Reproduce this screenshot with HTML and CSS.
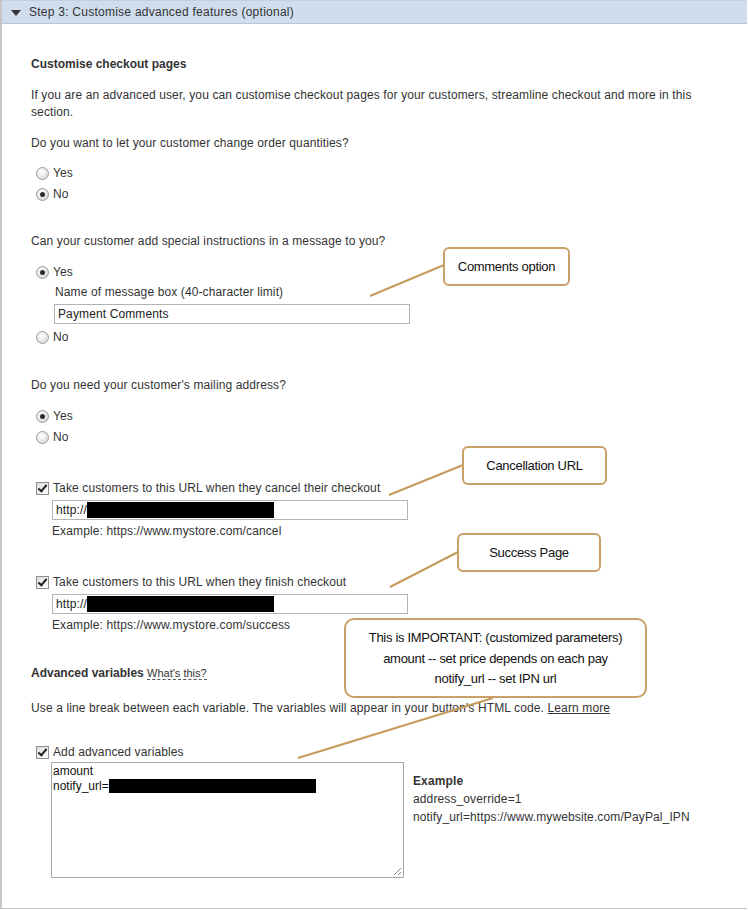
FILE: index.html
```html
<!DOCTYPE html>
<html lang="en">
<head>
<meta charset="utf-8">
<title>Step 3: Customise advanced features</title>
<link rel="stylesheet" href="styles.css">
</head>
<body>
<div class="panel">
  <div class="hdr"><span class="tri"></span>Step 3: Customise advanced features (optional)</div>
  <div class="content">
    <h3 class="title">Customise checkout pages</h3>
    <p class="intro">If you are an advanced user, you can customise checkout pages for your customers, streamline checkout and more in this section.</p>

    <p class="q q1">Do you want to let your customer change order quantities?</p>
    <div class="opt"><span class="radio"></span>Yes</div>
    <div class="opt"><span class="radio on"></span>No</div>

    <p class="q q2">Can your customer add special instructions in a message to you?</p>
    <div class="opt"><span class="radio on"></span>Yes</div>
    <div class="sub">Name of message box (40-character limit)</div>
    <div class="field msg">Payment Comments</div>
    <div class="opt"><span class="radio"></span>No</div>

    <p class="q q3">Do you need your customer's mailing address?</p>
    <div class="opt"><span class="radio on"></span>Yes</div>
    <div class="opt"><span class="radio"></span>No</div>

    <div class="opt chkrow c1"><span class="check"></span>Take customers to this URL when they cancel their checkout</div>
    <div class="field url">http://<span class="redact"></span></div>
    <div class="example">Example: https://www.mystore.com/cancel</div>

    <div class="opt chkrow c2"><span class="check"></span>Take customers to this URL when they finish checkout</div>
    <div class="field url">http://<span class="redact"></span></div>
    <div class="example">Example: https://www.mystore.com/success</div>

    <h3 class="title adv">Advanced variables <span class="whats">What's this?</span></h3>
    <p class="q q4">Use a line break between each variable. The variables will appear in your button's HTML code. <span class="learn">Learn more</span></p>

    <div class="opt chkrow c3"><span class="check"></span>Add advanced variables</div>
    <div class="varrow">
      <div class="textarea">
        <div>amount</div>
        <div>notify_url=<span class="redact tall"></span></div>
        <span class="grip"></span>
      </div>
      <div class="exbox">
        <div class="exhead">Example</div>
        <div>address_override=1</div>
        <div>notify_url=https://www.mywebsite.com/PayPal_IPN</div>
      </div>
    </div>
  </div>

  <svg class="leaders" width="748" height="910" viewBox="0 0 748 910">
    <line x1="370" y1="296" x2="444" y2="265"/>
    <line x1="389" y1="495" x2="463" y2="465"/>
    <line x1="390" y1="587" x2="458" y2="552"/>
    <line x1="298" y1="758" x2="493" y2="698"/>
  </svg>
  <div class="callout co1">Comments option</div>
  <div class="callout co2">Cancellation URL</div>
  <div class="callout co3">Success Page</div>
  <div class="callout co4">This is IMPORTANT: (customized parameters)<br>amount -- set price depends on each pay<br>notify_url -- set IPN url</div>
</div>
</body>
</html>
```
FILE: styles.css
```css
html, body {
  margin: 0;
  padding: 0;
  background: #fff;
}
body {
  font-family: "Liberation Sans", Arial, sans-serif;
  font-size: 12px;
  color: #333;
}
.panel {
  position: relative;
  width: 747px;
  height: 909px;
  box-sizing: border-box;
  border-left: 2px solid #c6c6c6;
  border-bottom: 1px solid #c6c6c6;
}
.hdr {
  height: 22px;
  line-height: 23px;
  background: #cfddec;
  border-top: 1px solid #c3cfdc;
  border-bottom: 1px solid #b8c6d6;
  padding-left: 27px;
  position: relative;
  color: #333;
  letter-spacing: 0.25px;
}
.tri {
  position: absolute;
  left: 9px;
  top: 9px;
  width: 0;
  height: 0;
  border-left: 5px solid transparent;
  border-right: 5px solid transparent;
  border-top: 6px solid #333;
}
.content {
  padding-left: 29px;
  line-height: 17px;
  letter-spacing: 0.12px;
}
p { margin: 0; }
.title {
  margin: 32px 0 0;
  font-size: 12px;
  font-weight: bold;
  line-height: 17px;
  letter-spacing: 0;
}
.intro {
  margin-top: 14px;
  width: 680px;
}
.q { margin-top: 14px; }
.q1 { margin-top: 14px; margin-bottom: 11px; }
.q2 { margin-top: 28px; margin-bottom: 12px; }
.q3 { margin-top: 29px; margin-bottom: 12px; }
.opt {
  height: 21px;
  line-height: 21px;
  display: flex;
  align-items: center;
  padding-left: 5px;
}
.radio {
  width: 11px;
  height: 11px;
  border-radius: 50%;
  border: 1px solid #9a9a9a;
  background: radial-gradient(circle at 40% 35%, #ffffff 0%, #e4e4e4 60%, #c4c4c4 100%);
  margin-right: 4px;
  position: relative;
  flex: none;
}
.radio.on::after {
  content: "";
  position: absolute;
  left: 3px;
  top: 3px;
  width: 5px;
  height: 5px;
  border-radius: 50%;
  background: #2c2c2c;
}
.check {
  width: 11px;
  height: 11px;
  border: 1px solid #8f8f8f;
  background: linear-gradient(135deg, #dedede, #ffffff);
  margin-right: 4px;
  position: relative;
  flex: none;
}
.check::after {
  content: "";
  position: absolute;
  left: 3px;
  top: 0px;
  width: 3px;
  height: 7px;
  border-right: 2px solid #222;
  border-bottom: 2px solid #222;
  transform: rotate(40deg);
}
.sub {
  padding-left: 24px;
  margin-top: 1px;
}
.field {
  box-sizing: border-box;
  height: 20px;
  line-height: 18px;
  border: 1px solid #b4b4b4;
  padding-left: 3px;
  display: flex;
  align-items: center;
  color: #222;
}
.field.msg {
  margin: 3px 0 3px 23px;
  width: 356px;
}
.field.url {
  margin: 1px 0 0 21px;
  width: 356px;
}
.redact {
  display: inline-block;
  width: 187px;
  height: 16px;
  background: #000;
}
.example {
  padding-left: 21px;
  margin-top: 3px;
}
.chkrow.c1 { margin-top: 30px; }
.chkrow.c2 { margin-top: 32px; }
.chkrow.c3 { margin-top: 25px; }
.adv { margin-top: 31px; }
.whats {
  font-weight: normal;
  font-size: 11px;
  border-bottom: 1px dashed #555;
}
.q4 { margin-top: 18px; }
.learn { text-decoration: underline; }
.varrow {
  display: flex;
  align-items: flex-start;
  margin-left: 20px;
  margin-top: -1px;
}
.textarea {
  position: relative;
  box-sizing: border-box;
  width: 353px;
  height: 116px;
  border: 1px solid #a8a8a8;
  padding: 1px 0 0 1px;
  line-height: 15px;
  color: #111;
  letter-spacing: 0;
}
.redact.tall {
  width: 207px;
  height: 14px;
  vertical-align: -3px;
}
.grip {
  position: absolute;
  right: 2px;
  bottom: 2px;
  width: 7px;
  height: 7px;
  background: linear-gradient(135deg, transparent 45%, #888 45%, #888 55%, transparent 55%, transparent 75%, #888 75%, #888 85%, transparent 85%);
}
.exbox {
  margin-left: 9px;
  margin-top: 10px;
  line-height: 18px;
}
.exhead { font-weight: bold; }
.leaders {
  position: absolute;
  left: -2px;
  top: 0;
  pointer-events: none;
}
.leaders line {
  stroke: #c59a5b;
  stroke-width: 2;
}
.callout {
  position: absolute;
  box-sizing: border-box;
  border: 2px solid #c9a068;
  border-radius: 6px;
  background: #fff;
  color: #111;
  font-size: 13px;
  letter-spacing: -0.3px;
  display: flex;
  align-items: center;
  justify-content: center;
  text-align: center;
}
.co1 { left: 441px; top: 247px; width: 127px; height: 39px; }
.co2 { left: 460px; top: 446px; width: 145px; height: 39px; }
.co3 { left: 455px; top: 533px; width: 144px; height: 39px; }
.co4 { left: 342px; top: 618px; width: 303px; height: 80px; padding-top: 2px; line-height: 20.5px; border-radius: 10px; }
```
